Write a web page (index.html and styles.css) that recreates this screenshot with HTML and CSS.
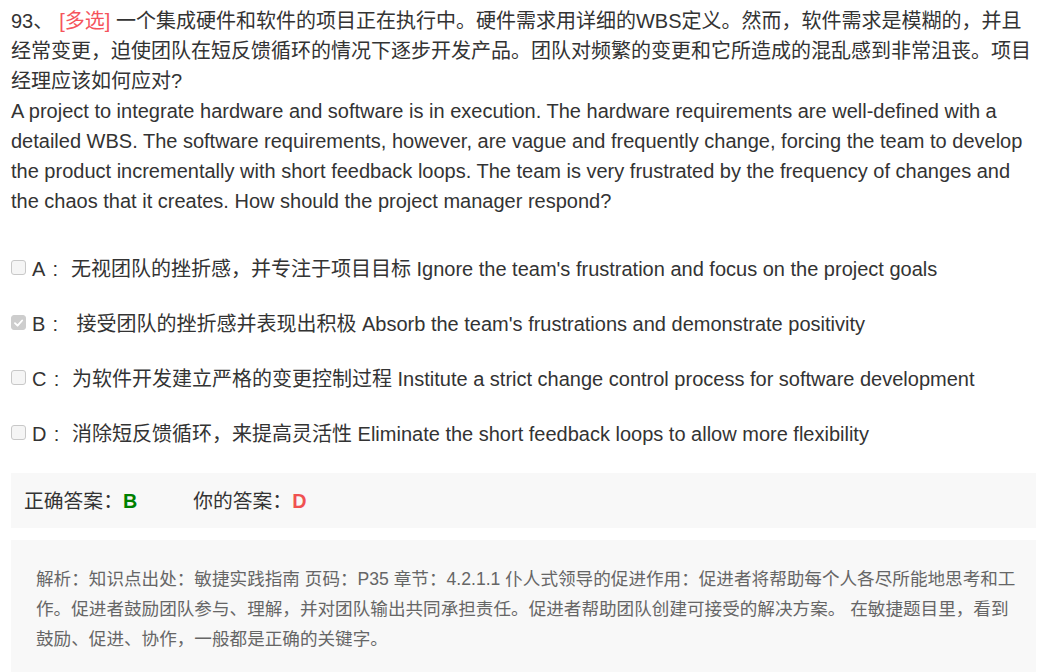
FILE: index.html
```html
<!DOCTYPE html>
<html lang="zh-CN">
<head>
<meta charset="utf-8">
<title>93</title>
<link rel="stylesheet" href="styles.css">
</head>
<body>
<div class="page">
  <p class="question"><span class="num">93、</span><span class="tag">[多选]</span> 一个集成硬件和软件的项目正在执行中。硬件需求用详细的WBS定义。然而，软件需求是模糊的，并且经常变更，迫使团队在短反馈循环的情况下逐步开发产品。团队对频繁的变更和它所造成的混乱感到非常沮丧。项目经理应该如何应对?<br>A project to integrate hardware and software is in execution. The hardware requirements are well-defined with a detailed WBS. The software requirements, however, are vague and frequently change, forcing the team to develop the product incrementally with short feedback loops. The team is very frustrated by the frequency of changes and the chaos that it creates. How should the project manager respond?</p>
  <ul class="options">
    <li class="option"><span class="box"></span><span class="label">A<span class="colon">:</span></span> 无视团队的挫折感，并专注于项目目标 Ignore the team's frustration and focus on the project goals</li>
    <li class="option"><span class="box checked"><svg viewBox="0 0 14 14" width="14" height="14"><path d="M3.2 7.2 L6 9.9 L10.9 4.3" fill="none" stroke="#fff" stroke-width="2" stroke-linecap="round" stroke-linejoin="round"/></svg></span><span class="label">B<span class="colon">:</span></span> &nbsp;接受团队的挫折感并表现出积极 Absorb the team's frustrations and demonstrate positivity</li>
    <li class="option"><span class="box"></span><span class="label">C<span class="colon">:</span></span> 为软件开发建立严格的变更控制过程 Institute a strict change control process for software development</li>
    <li class="option"><span class="box"></span><span class="label">D<span class="colon">:</span></span> 消除短反馈循环，来提高灵活性 Eliminate the short feedback loops to allow more flexibility</li>
  </ul>
  <div class="answers">
    <span class="ans">正确答案：<b class="right">B</b></span>
    <span class="ans mine">你的答案：<b class="wrong">D</b></span>
  </div>
  <div class="analysis">解析：知识点出处：敏捷实践指南 页码：P35 章节：4.2.1.1 仆人式领导的促进作用：促进者将帮助每个人各尽所能地思考和工作。促进者鼓励团队参与、理解，并对团队输出共同承担责任。促进者帮助团队创建可接受的解决方案。 在敏捷题目里，看到鼓励、促进、协作，一般都是正确的关键字。</div>
</div>
</body>
</html>
```
FILE: styles.css
```css
html, body {
  margin: 0;
  padding: 0;
  background: #fff;
}
body {
  font-family: "Liberation Sans", Arial, "Noto Sans CJK SC", sans-serif;
  color: #333;
  font-size: 20px;
  line-height: 30px;
}
.page {
  padding: 6px 18px 0 11px;
}
.question {
  margin: 0;
}
.num {
  margin-right: 6px;
}
.tag {
  color: #f5545c;
}
.options {
  list-style: none;
  margin: 25px 0 0 0;
  padding: 0;
}
.option {
  height: 55px;
  display: flex;
  align-items: center;
  white-space: pre;
}
.box {
  width: 13px;
  height: 13px;
  border: 1px solid #c8c8c8;
  border-radius: 3px;
  background: #f5f5f5;
  margin-right: 6px;
  flex: none;
  display: flex;
  align-items: center;
  justify-content: center;
  position: relative;
  top: -1px;
}
.box.checked {
  background: #cdcdcd;
  border-color: #cdcdcd;
}
.box svg {
  display: block;
}
.label {
  display: inline-block;
}
.colon {
  display: inline-block;
  width: 20px;
  text-align: center;
}
.answers {
  margin-top: 12px;
  background: #f8f8f8;
  height: 55px;
  display: flex;
  align-items: center;
  padding-left: 13px;
  font-size: 19.8px;
}
.ans b {
  font-weight: bold;
}
.mine {
  margin-left: 56px;
}
.right {
  color: #008000;
}
.wrong {
  color: #f05151;
}
.analysis {
  margin-top: 12px;
  background: #f8f8f8;
  padding: 24px 18px 24px 25px;
  font-size: 17.6px;
  line-height: 30px;
  color: #666;
}
```
